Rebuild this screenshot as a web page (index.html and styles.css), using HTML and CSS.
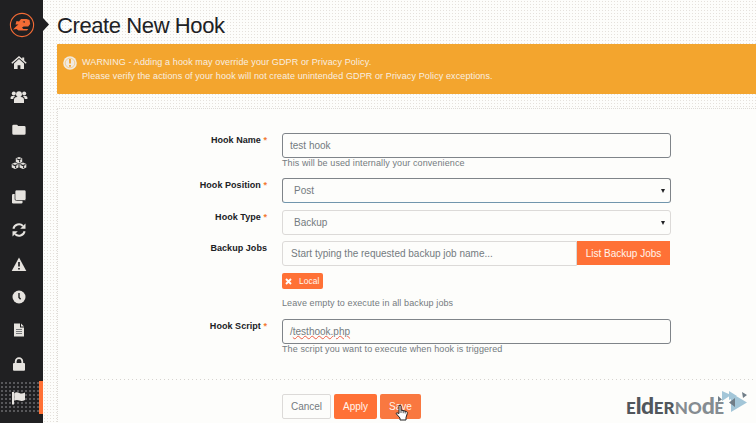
FILE: index.html
```html
<!DOCTYPE html>
<html lang="en">
<head>
<meta charset="utf-8">
<title>Create New Hook</title>
<link rel="stylesheet" href="styles.css">
</head>
<body>
<div class="app">
  <nav class="sidebar">
    <div class="brand">
      <svg width="26" height="26" viewBox="0 0 26 26"><circle cx="13" cy="13" r="11.6" fill="none" stroke="#f46b35" stroke-width="1.1"/><path d="M4 17.500L7.500 14l2-1.500H6.500L7.500 9l2.500.5 2-2.500h5.500l3 1 .7 4-2 2.500h-4.500l-1.700 1 1.300 1.500h5L18 18.500H9.500L7.500 17zM15.500 9l-2 1 2.500.7z" fill="#f46b35" fill-rule="evenodd"/></svg>
    </div>
    <a class="item"><svg width="16" height="14" viewBox="0 0 16 14"><path d="M.8 7.2L8 1l7.2 6.2" fill="none" stroke="#e6e3df" stroke-width="1.5"/><path d="M11.2 1.4h2v4l-2-1.8zM3 7.4l5-4.300 5 4.300V13H9.400V9.200H6.600V13H3z"/></svg></a>
    <a class="item"><svg width="18" height="14" viewBox="0 0 18 14"><circle cx="9" cy="4.2" r="2.9"/><circle cx="3.8" cy="3.4" r="2"/><circle cx="14.2" cy="3.4" r="2"/><path d="M4 13V10q0-3 3-3h4q3 0 3 3v3zM.6 9V7.5Q.6 6 2.2 6h3Q3.4 7 3.2 9zM17.4 9V7.5Q17.4 6 15.8 6h-3q1.8 1 2 3z"/></svg></a>
    <a class="item"><svg width="14" height="12" viewBox="0 0 14 12"><path d="M.3 2Q.3.7 1.6.7h3Q5.900.7 5.900 2h6.300q1.400 0 1.400 1.400v6q0 1.400-1.400 1.400H1.700Q.3 10.800.3 9.400z"/></svg></a>
    <a class="item"><svg width="16" height="14" viewBox="0 0 16 14"><path d="M8 1l3.200 1.300v3.600L8 7.400 4.800 5.900V2.300zM4 6.600l3.500 1.400v3.500L4 13 .7 11.500V8zM12 6.600L15.300 8v3.500L12 13l-3.500-1.500V8z"/><path d="M5.600 2.700L8 3.700l2.400-1M8.600 4.300v2M1.500 8.600L4 9.600l2.500-1M4.600 10.300v1.600M9.500 8.600l2.500 1 2.500-1M12.600 10.300v1.600" fill="none" stroke="#202022" stroke-width="1.100"/></svg></a>
    <a class="item"><svg width="16" height="16" viewBox="0 0 16 16"><rect x="1" y="5" width="10.500" height="9.500" rx="1.200"/><rect x="4" y="1" width="11" height="10.500" rx="1.500" stroke="#202022" stroke-width=".7"/></svg></a>
    <a class="item"><svg width="16" height="16" viewBox="0 0 16 16"><path d="M2.400 6.800A5.700 5.700 0 0 1 12 4M13.600 9.200A5.700 5.700 0 0 1 4 12" fill="none" stroke="#e6e3df" stroke-width="2"/><path d="M14.500 1.500v5.300H9.200zM1.500 14.500V9.200h5.300z"/></svg></a>
    <a class="item"><svg width="16" height="16" viewBox="0 0 16 16"><path d="M8 1.500L15.300 15H.7z"/><path d="M8 6v4.500M8 12v1.600" stroke="#202022" stroke-width="1.700"/></svg></a>
    <a class="item"><svg width="14" height="14" viewBox="0 0 14 14"><circle cx="7" cy="7" r="6.500"/><path d="M7 3v4.500l1.600 1.700" fill="none" stroke="#202022" stroke-width="1.400"/></svg></a>
    <a class="item"><svg width="12" height="14" viewBox="0 0 12 14"><path d="M1 .5h6V4.500h4V13.500H1zM8 .5l3 3H8z"/><path d="M3 6.500h6M3 8.500h6M3 10.500h6" stroke="#77787b"/></svg></a>
    <a class="item"><svg width="14" height="14" viewBox="0 0 14 14"><path d="M3.700 7V4.500a3.300 3.300 0 0 1 6.600 0V7" fill="none" stroke="#e6e3df" stroke-width="1.800"/><rect x="1" y="6" width="12" height="7.700" rx="1"/></svg></a>
    <a class="item active"><svg width="16" height="14" viewBox="0 0 16 14"><path d="M1 1h2v12.500H1zM3.300 2q2.500-1.300 5 0t5.700-.5V9q-3 1.700-5.700.500t-5 .3z"/></svg></a>
  </nav>
  <main class="content">
    <h1>Create New Hook</h1>
    <div class="alert">
      <svg width="14" height="14" viewBox="0 0 14 14"><circle cx="7" cy="7" r="6.800" fill="#f1ebe2"/><circle cx="7" cy="7" r="4.800" fill="none" stroke="#f4b95b" stroke-width=".6"/><path d="M7 3v4.600M7 9v1.800" stroke="#f3a42e" stroke-width="1.800"/></svg>
      <p>WARNING - Adding a hook may override your GDPR or Privacy Policy.<br>Please verify the actions of your hook will not create unintended GDPR or Privacy Policy exceptions.</p>
    </div>
    <form class="panel">
      <div class="row first"><label>Hook Name <i>*</i></label><div class="field"><div class="input dark">test hook</div><p class="help">This will be used internally your convenience</p></div></div>
      <div class="row pos"><label>Hook Position <i>*</i></label><div class="field"><div class="input select focus">Post<b></b></div></div></div>
      <div class="row type"><label>Hook Type <i>*</i></label><div class="field"><div class="input select">Backup<b></b></div></div></div>
      <div class="row jobs"><label>Backup Jobs</label><div class="field">
        <div class="group"><div class="input search">Start typing the requested backup job name...</div><div class="btn list">List Backup Jobs</div></div>
        <div class="tag"><svg width="7" height="7" viewBox="0 0 7 7"><path d="M1 1l5 5M6 1L1 6" stroke="#fff" stroke-width="1.900"/></svg>Local</div>
        <p class="help jobs-help">Leave empty to execute in all backup jobs</p></div></div>
      <div class="row script"><label>Hook Script <i>*</i></label><div class="field"><div class="input dark">/<span class="spell">testhook.php</span></div><p class="help script-help">The script you want to execute when hook is triggered</p></div></div>
      <div class="actions"><div class="btn cancel">Cancel</div><div class="btn apply">Apply</div><div class="btn save">Save</div></div>
    </form>
  </main>
</div>
<svg class="arrow" width="7" height="14" viewBox="0 0 7 14"><path d="M0 0l6 6.500L0 13z" fill="#202022"/></svg>
<svg class="cursor" width="14" height="17" viewBox="0 0 14 17"><path d="M4 1.500q1.500-1 2 .5v4l5.500 1.500q1 .5.800 2L11 13.500V16H5v-2L1 9.500Q1.500 8 4 9.500z" fill="#fff" stroke="#222" stroke-width="1"/><path d="M6 6v3M8.200 6.500v2.700M10.200 7v2.500" stroke="#222" stroke-width=".8"/></svg>
<svg class="plane" width="32" height="24" viewBox="0 0 32 24"><path d="M14 3l16 9.500L14 22zM5 1l9 4-9 6zM12 1l8 5-8 4z" fill="#a3c6d8"/><path d="M1 6l4 3.500L1 12zM25 2l5 3-4 3zM18 8v9l-6-4.500z" fill="#707d87"/></svg>
<div class="watermark"><span>E<em>ld</em>ER</span><span class="node">NO<em>d</em>E</span></div>
</body>
</html>
```

FILE: styles.css
```css
* { box-sizing: border-box; }
body { margin: 0; width: 756px; height: 423px; overflow: hidden; position: relative; font: 10px/12px "Liberation Sans", Arial, sans-serif; color: #747b80; background: #f6f5f2; }
.app { display: flex; height: 423px; }
.sidebar { width: 43px; flex: none; background: #202022; padding-top: 12px; }
.brand { height: 34.500px; padding-left: 9px; }
.item { display: flex; height: 33.400px; width: 43px; padding-right: 5px; align-items: center; justify-content: center; }
.item svg { fill: #e6e3df; }
.item.active { height: 33px; margin-top: 1px; padding-right: 1px; border-right: 4px solid #ff7136; background: radial-gradient(circle, #77777a 0.600px, transparent 0.900px) 0 0 / 4px 4px #202022; }
.content { flex: 1; min-width: 0; padding-left: 14px; background: radial-gradient(circle, #e5e1dc 0.600px, transparent 0.900px) 0 0 / 3px 3px #fdfdfb; }
h1 { margin: 0; height: 44px; font-size: 22px; line-height: 25px; padding-top: 13px; font-weight: 400; color: #202124; letter-spacing: -.4px; white-space: nowrap; }
.alert { height: 50px; background: #f3a52e; color: #f8efe1; display: flex; gap: 5px; padding: 12px 0 0 6px; border-radius: 1px 0 0 1px; font-size: 9px; line-height: 13.500px; letter-spacing: .11px; white-space: nowrap; }
.alert p { margin: 0; }
.panel { margin-top: 14px; height: 320px; background: #fdfdfb; border: 1px dotted #dedbd7; border-right: 0; padding-top: 24px; }
.row { display: grid; grid-template-columns: 209px 389px; column-gap: 15px; }
label { text-align: right; font-size: 9px; font-weight: 700; color: #202124; padding-top: 1px; white-space: nowrap; letter-spacing: .05px; }
label i { font-style: normal; color: #f27a32; }
.first { height: 45px; }
.pos { height: 32px; }
.type { height: 31px; }
.jobs { height: 78px; }
.script { height: 60px; }
.input { height: 25px; border: 1px solid #dcdad8; border-radius: 3px; padding: 0 7px; line-height: 23px; position: relative; white-space: nowrap; }
.dark { border-color: #7f8489; }
.focus { border-color: #7f8489; border-bottom-color: #7196ad; }
.select { padding-left: 11px; }
.select b { position: absolute; right: 5px; top: 10px; border: 2px solid transparent; border-top: 4px solid #202124; border-bottom: 0; }
.help { margin: 0; font-size: 9px; line-height: 11px; letter-spacing: .1px; white-space: nowrap; }
.group { display: flex; }
.search { flex: 1; border-radius: 3px 0 0 3px; padding-left: 8px; }
.btn { height: 25px; line-height: 25px; text-align: center; color: #fff5ed; background: #ff7136; border-radius: 2px; white-space: nowrap; }
.list { width: 93px; margin-right: 1px; height: 24px; border-radius: 0; }
.tag { margin-top: 7px; width: 41px; height: 16px; border-radius: 2px; background: #ff7136; color: #fff5ed; font-size: 8.500px; line-height: 15px; display: flex; align-items: center; gap: 7px; padding-left: 3px; }
.jobs-help { margin-top: 9px; }
.spell { text-decoration: underline wavy #ee5e45 .7px; text-underline-offset: 0; }
.actions { margin: 0 0 0 18px; background: repeating-linear-gradient(90deg, #d6d3cf 0 1px, transparent 1px 4px) 0 0 / 100% 1px no-repeat; display: flex; gap: 3px; padding: 15px 0 0 206px; }
.cancel { width: 49px; background: #fdfdfb; color: #747b80; border: 1px solid #dcdad8; line-height: 23px; }
.apply { width: 43px; }
.save { width: 41px; background: #f97840; }
.arrow { position: absolute; left: 43px; top: 18px; }
.cursor { position: absolute; left: 395px; top: 404px; }
.watermark { position: absolute; left: 626px; top: 394px; font: 900 17px/28px Lato, sans-serif; color: #51565b; letter-spacing: .1px; white-space: nowrap; }
.watermark em { font-style: normal; font-size: 23px; line-height: 20px; letter-spacing: -.6px; }
.node { color: #858c91; }
.plane { position: absolute; left: 717px; top: 390px; }
```
